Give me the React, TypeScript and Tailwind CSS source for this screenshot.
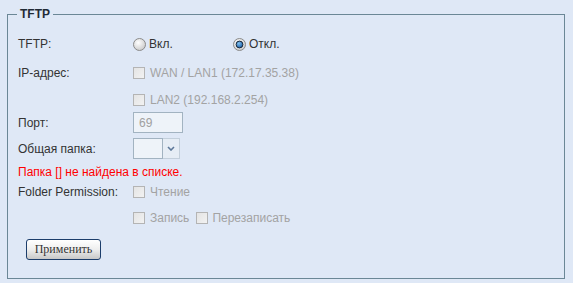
import React from "react";

function Radio({ checked }: { checked?: boolean }) {
  return (
    <svg width="13" height="13" viewBox="0 0 13 13" className="shrink-0">
      <defs>
        <radialGradient id={checked ? "rg1" : "rg0"} cx="40%" cy="35%" r="70%">
          <stop offset="0%" stopColor="#ffffff" />
          <stop offset="100%" stopColor="#c9c9c9" />
        </radialGradient>
        <radialGradient id="dot" cx="40%" cy="35%" r="70%">
          <stop offset="0%" stopColor="#7fc0f0" />
          <stop offset="100%" stopColor="#1457a0" />
        </radialGradient>
      </defs>
      <circle cx="6.5" cy="6.5" r="6" fill={`url(#${checked ? "rg1" : "rg0"})`} stroke="#8a8a8a" strokeWidth="1" />
      {checked && <circle cx="6.5" cy="6.5" r="3.4" fill="url(#dot)" stroke="#1d2a3a" strokeWidth="1" />}
    </svg>
  );
}

function Check() {
  return (
    <span className="block w-[12px] h-[12px] shrink-0 border border-[#b4b4b4] bg-linear-to-br from-[#e4e4e4] to-[#f2f2f2]" />
  );
}

const font = { fontFamily: '"Liberation Sans", Arial, sans-serif' };

export default function App() {
  return (
    <div
      className="w-[573px] h-[283px] bg-[#dfe8f6] pt-[14px] pl-[7px] text-[12px] text-[#333333]"
      style={font}
    >
      <div className="relative box-border w-[558px] h-[265px] border border-[#6b8796] pt-[22px] pl-[10px]">
        <div className="absolute left-[9px] top-[-8px] px-[3px] bg-[#dfe8f6] leading-[14px] font-bold text-[#1f2a36]">
          TFTP
        </div>

        <div className="flex items-center h-[14px] leading-[14px]">
          <div className="w-[115px]">TFTP:</div>
          <div className="flex items-center w-[100px] gap-[3px]">
            <Radio />
            <span>Вкл.</span>
          </div>
          <div className="flex items-center gap-[3px]">
            <Radio checked />
            <span>Откл.</span>
          </div>
        </div>

        <div className="flex items-center h-[14px] leading-[14px] mt-[15px]">
          <div className="w-[115px]">IP-адрес:</div>
          <div className="flex items-center gap-[5px] text-[#a3a3a3]">
            <Check />
            <span>WAN / LAN1 (172.17.35.38)</span>
          </div>
        </div>

        <div className="flex items-center h-[14px] leading-[14px] mt-[13px]">
          <div className="w-[115px]" />
          <div className="flex items-center gap-[5px] text-[#a3a3a3]">
            <Check />
            <span>LAN2 (192.168.2.254)</span>
          </div>
        </div>

        <div className="flex items-center h-[21px] mt-[5px]">
          <div className="w-[115px]">Порт:</div>
          <div className="box-border w-[50px] h-[21px] border border-[#a2b3c1] bg-[#eef3f9] pl-[5px] flex items-center text-[#a0a0a0]">
            69
          </div>
        </div>

        <div className="flex items-center h-[21px] mt-[5px]">
          <div className="w-[115px]">Общая папка:</div>
          <div className="flex h-[21px]">
            <div className="box-border w-[30px] h-[21px] border border-[#a2b3c1] bg-[#eef3f9]" />
            <div className="box-border w-[17px] h-[21px] border border-l-0 border-[#c3cfdb] bg-[#e6edf5] flex items-center justify-center">
              <svg width="8" height="5" viewBox="0 0 8 5">
                <path d="M1 1 L4 4 L7 1" fill="none" stroke="#5d7899" strokeWidth="1.6" />
              </svg>
            </div>
          </div>
        </div>

        <div className="flex items-center h-[14px] leading-[14px] mt-[6px] text-[#ff0000]">
          Папка [] не найдена в списке.
        </div>

        <div className="flex items-center h-[14px] leading-[14px] mt-[6px]">
          <div className="w-[115px]">Folder Permission:</div>
          <div className="flex items-center gap-[5px] text-[#a3a3a3]">
            <Check />
            <span>Чтение</span>
          </div>
        </div>

        <div className="flex items-center h-[14px] leading-[14px] mt-[12px]">
          <div className="w-[115px]" />
          <div className="flex items-center gap-[5px] text-[#a3a3a3]">
            <Check />
            <span>Запись</span>
          </div>
          <div className="flex items-center gap-[4px] ml-[7px] text-[#a3a3a3]">
            <Check />
            <span>Перезаписать</span>
          </div>
        </div>

        <div className="flex h-[21px] mt-[14px] pl-[8px]">
          <button
            className="box-border w-[75px] h-[21px] rounded-[3px] border border-[#1c3d6b] bg-linear-to-b from-white via-[#eeeeee] to-[#c8c8c8] text-[12px] font-normal text-[#333333] leading-[19px]"
            style={{ fontFamily: '"Liberation Serif", "Times New Roman", serif' }}
          >
            Применить
          </button>
        </div>
      </div>
    </div>
  );
}
